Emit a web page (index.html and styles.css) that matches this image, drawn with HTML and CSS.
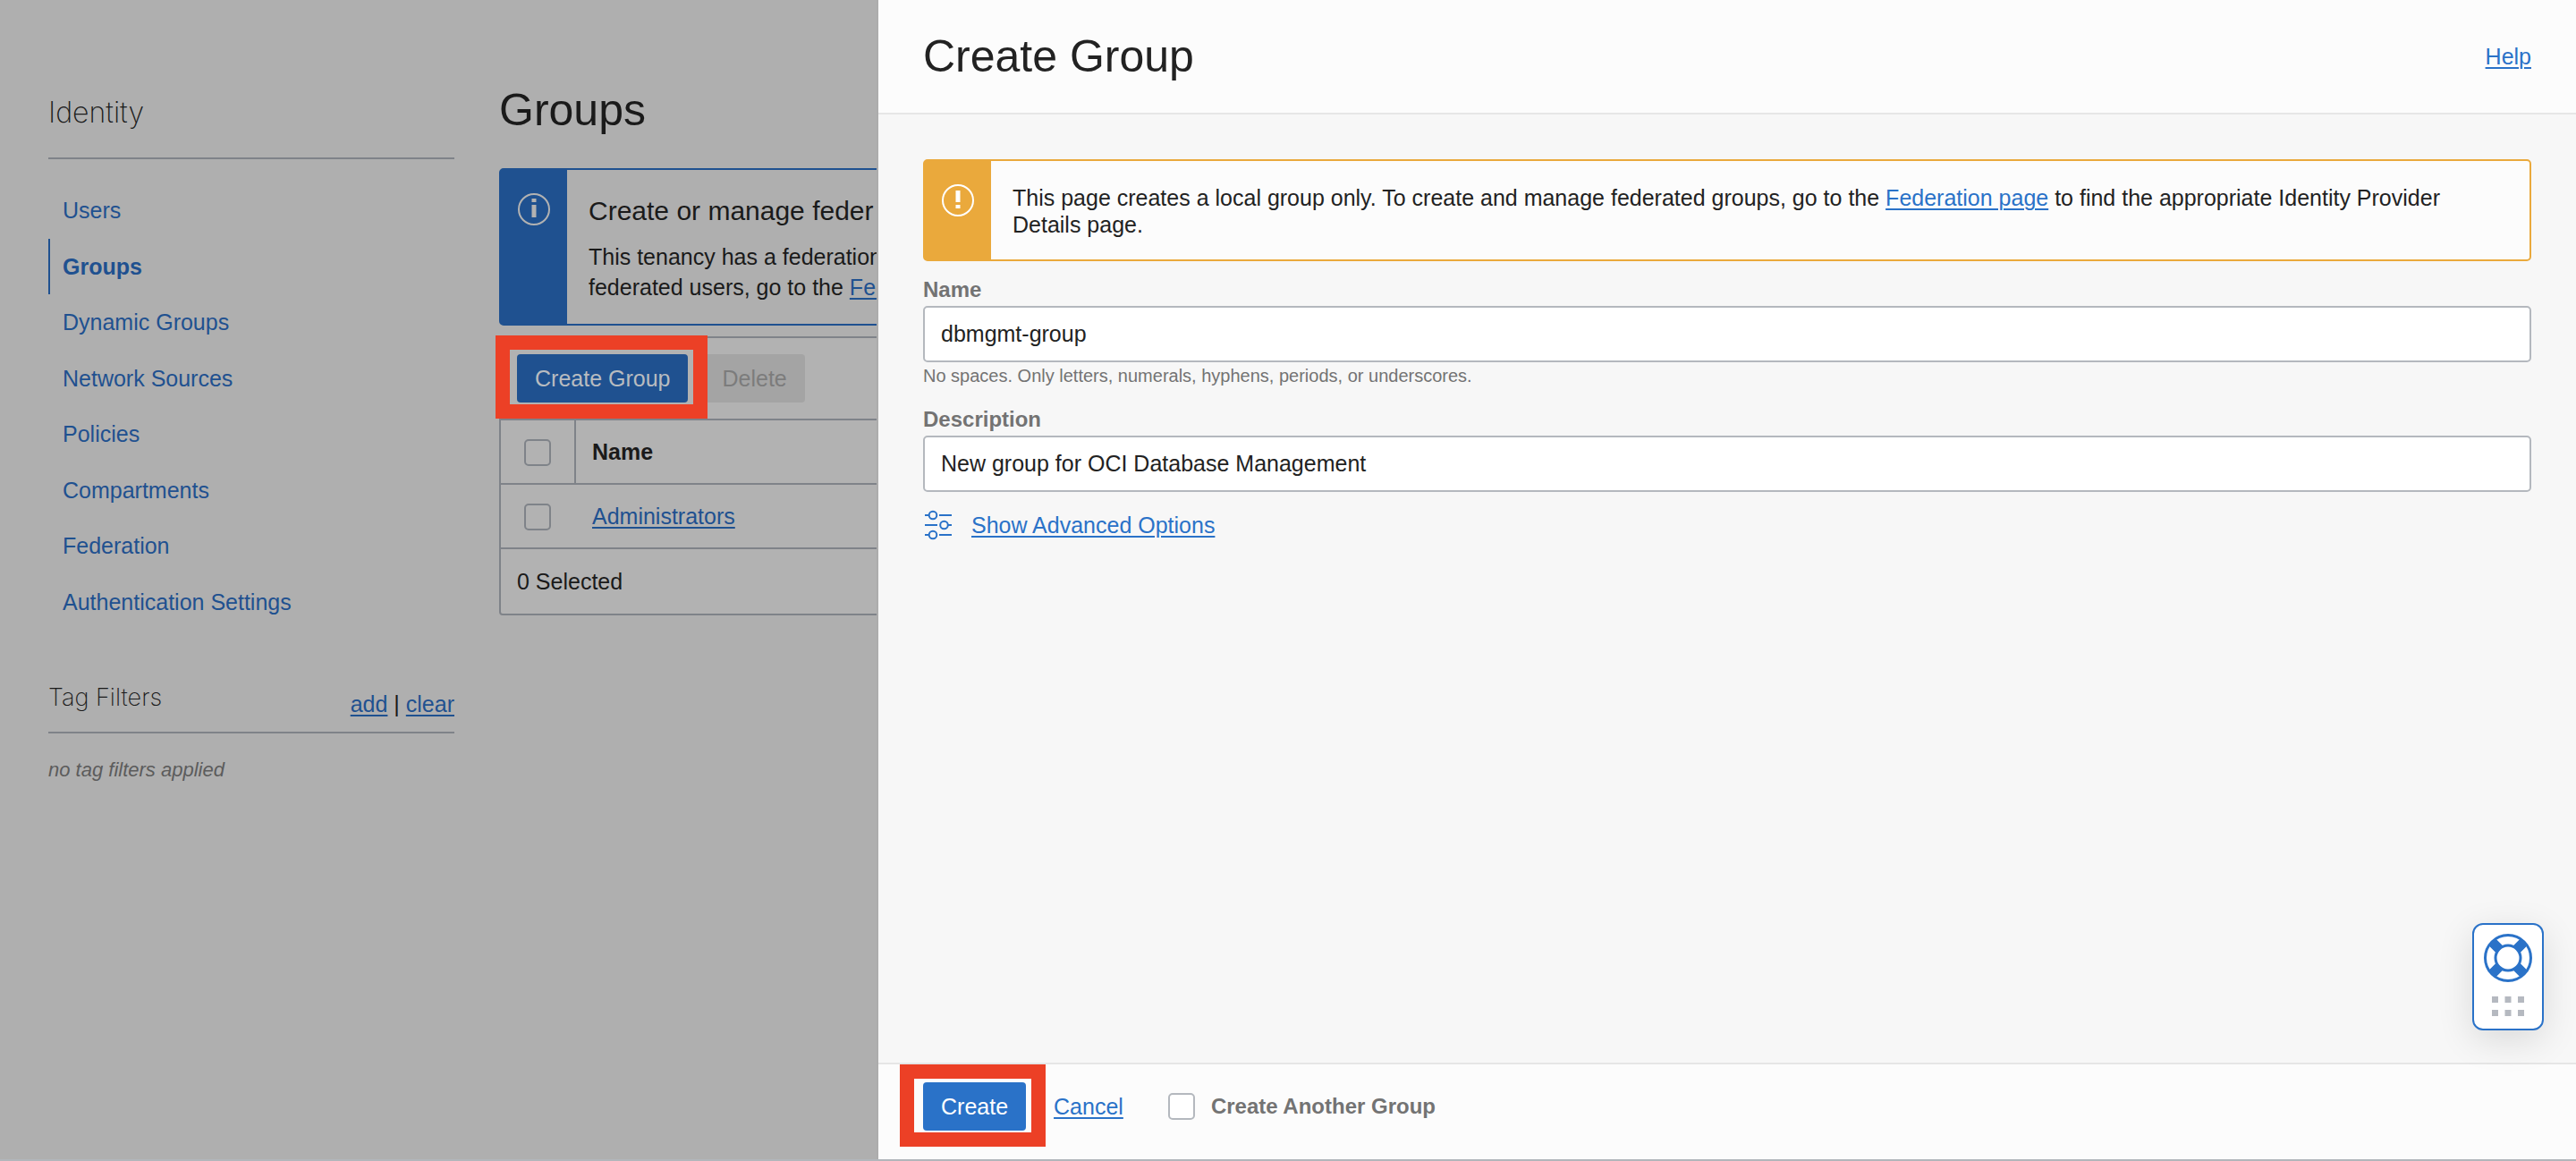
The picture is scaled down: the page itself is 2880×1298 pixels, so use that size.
FILE: index.html
```html
<!DOCTYPE html>
<html lang="en">
<head>
<meta charset="utf-8">
<title>Create Group</title>
<link rel="stylesheet" href="styles.css">
</head>
<body>
<div class="page">
  <aside class="sidebar">
    <h2 class="side-title">Identity</h2>
    <nav class="side-nav">
      <a href="#users">Users</a>
      <a href="#groups" class="active">Groups</a>
      <a href="#dynamic">Dynamic Groups</a>
      <a href="#network">Network Sources</a>
      <a href="#policies">Policies</a>
      <a href="#compartments">Compartments</a>
      <a href="#federation">Federation</a>
      <a href="#auth">Authentication Settings</a>
    </nav>
    <div class="tags-head">
      <h3 class="tags-title">Tag Filters</h3>
      <div class="tags-actions"><a href="#add">add</a> | <a href="#clear">clear</a></div>
    </div>
    <p class="tags-empty">no tag filters applied</p>
  </aside>
  <main class="main">
    <h1 class="title">Groups</h1>
    <section class="alert info">
      <div class="alert-icon">
        <svg width="36" height="36" viewBox="0 0 36 36" aria-hidden="true"><circle cx="18" cy="18" r="17" fill="none" stroke="currentColor" stroke-width="2"/><path d="M15.500 6h5v4h-5zM15.500 13h5v14h-5z" fill="currentColor"/></svg>
      </div>
      <div class="alert-body">
        <h2 class="alert-title">Create or manage feder</h2>
        <p>This tenancy has a federation</p>
        <p>federated users, go to the <a href="#fed">Fed</a></p>
      </div>
    </section>
    <section class="list">
      <div class="toolbar">
        <span class="mark"><button type="button" class="btn primary">Create Group</button></span>
        <button type="button" class="btn" disabled>Delete</button>
      </div>
      <table class="table">
        <thead><tr><th class="pick"><input type="checkbox" class="check" aria-label="Select all"></th><th>Name</th></tr></thead>
        <tbody><tr><td class="pick"><input type="checkbox" class="check" aria-label="Select Administrators"></td><td><a href="#administrators">Administrators</a></td></tr></tbody>
      </table>
      <div class="list-foot">0 Selected</div>
    </section>
  </main>
</div>
<form class="drawer">
  <header class="drawer-head">
    <h1 class="title">Create Group</h1>
    <a href="#help">Help</a>
  </header>
  <div class="drawer-body">
    <section class="alert warn">
      <div class="alert-icon">
        <svg width="36" height="36" viewBox="0 0 36 36" aria-hidden="true"><circle cx="18" cy="18" r="17" fill="none" stroke="currentColor" stroke-width="2"/><path d="M15.500 7h5v13h-5zM15.500 23h5v4h-5z" fill="currentColor"/></svg>
      </div>
      <p class="alert-body">This page creates a local group only. To create and manage federated groups, go to the <a href="#fed2">Federation page</a> to find the appropriate Identity Provider Details page.</p>
    </section>
    <label class="label" for="name">Name</label>
    <input class="field" id="name" type="text" value="dbmgmt-group">
    <p class="hint">No spaces. Only letters, numerals, hyphens, periods, or underscores.</p>
    <label class="label" for="desc">Description</label>
    <input class="field" id="desc" type="text" value="New group for OCI Database Management">
    <div class="advanced">
      <svg width="34" height="34" viewBox="0 0 34 34" fill="none" stroke="currentColor" stroke-width="2" aria-hidden="true"><path d="M2 6h5M18 6h14M2 17h14M27 17h5M2 28h5M18 28h14"/><circle cx="11" cy="6" r="4.300"/><circle cx="23.500" cy="17" r="4.300"/><circle cx="11" cy="28" r="4.300"/></svg>
      <a href="#advanced">Show Advanced Options</a>
    </div>
  </div>
  <footer class="drawer-foot">
    <span class="mark"><button type="button" class="btn primary">Create</button></span>
    <a href="#cancel">Cancel</a>
    <input type="checkbox" class="check" id="another">
    <label class="label" for="another">Create Another Group</label>
  </footer>
</form>
<button type="button" class="support" aria-label="Support">
  <svg width="54" height="54" viewBox="0 0 54 54" fill="none" stroke="#2a72c8" aria-hidden="true">
    <path d="M9.700 9.700l7.500 7.500M44.300 9.700l-7.500 7.500M9.700 44.300l7.500-7.500M44.300 44.300l-7.500-7.500" stroke-width="11"/>
    <circle cx="27" cy="27" r="25.500" stroke-width="3"/>
    <circle cx="27" cy="27" r="14" stroke-width="3"/>
  </svg>
  <svg width="36" height="22" viewBox="0 0 36 22" fill="#b5b9c0" aria-hidden="true"><path d="M0 0h7v7H0zM14.500 0h7v7h-7zM29 0h7v7h-7zM0 15h7v7H0zM14.500 15h7v7h-7zM29 15h7v7h-7z"/></svg>
</button>
</body>
</html>
```
FILE: styles.css
```css
* { box-sizing: border-box; }

body {
  display: grid;
  grid-template-columns: 980px 1fr;
  margin: 0;
  min-height: 100vh;
  border-bottom: 2px solid #b2b6bb;
  background: #afafaf;
  color: #1a1a1a;
  font: 25px/30px "Liberation Sans", Arial, sans-serif;
}

h1, h2, h3, p { margin: 0; font-weight: 400; }
a { color: #1f5190; text-decoration-thickness: 2px; text-underline-offset: 3px; }

.page {
  display: grid;
  grid-template-columns: 454px 1fr;
  gap: 46px;
  padding-left: 54px;
}

/* Sidebar */
.side-title {
  font: 200 32px/44px Inter, "Liberation Sans", sans-serif;
  padding: 104px 0 28px;
  border-bottom: 2px solid #7f8389;
}
.side-nav {
  display: flex;
  flex-direction: column;
  justify-content: space-between;
  height: 500px;
  margin-top: 26px;
}
.side-nav a {
  padding-left: 14px;
  border-left: 2px solid transparent;
  line-height: 62px;
  text-decoration: none;
}
.side-nav .active { border-color: #1f5190; font-weight: 700; }
.tags-head {
  display: flex;
  justify-content: space-between;
  align-items: flex-end;
  margin-top: 54px;
  padding-bottom: 16px;
  border-bottom: 2px solid #7f8389;
}
.tags-title { font: 200 27px/44px Inter, "Liberation Sans", sans-serif; }
.tags-empty { margin-top: 26px; color: #5c5c5c; font-size: 22px; font-style: italic; }

/* Groups list: the sheet runs on to the right, under the drawer's edge */
.main { overflow: hidden; padding-left: 4px; }
.main .alert, .list { margin-right: -20px; }
.title { font-size: 50px; line-height: 60px; }
.main .title { padding: 93px 0 35px; }

.alert {
  display: grid;
  grid-template-columns: 74px 1fr;
  border: 2px solid;
  border-radius: 5px;
}
.info { border-color: #1f5190; }
.info .alert-icon { background: #1f5190; color: #b2b2b2; }
.warn { border-color: #eaa93c; background: #fcfcfc; }
.warn .alert-icon { background: #eaa93c; color: #fff; }
.alert-icon { display: flex; justify-content: center; padding-top: 26px; }
.alert-body { padding: 26px 24px 24px; color: #222; }
.info .alert-body { line-height: 34px; padding: 28px 0 24px 24px; white-space: nowrap; color: #1a1a1a; }
.alert-title { font-size: 30px; line-height: 36px; padding-bottom: 16px; }

.list {
  margin-top: 12px;
  border: 2px solid #7f8389;
  border-radius: 4px;
  background: #b2b2b2;
}
.toolbar { display: flex; gap: 18px; padding: 18px; }
.btn {
  height: 54px;
  padding: 0 20px;
  border: 0;
  border-radius: 4px;
  background: #a4a4a4;
  color: #7c7c7c;
  font: inherit;
}
.primary { background: #1f5190; color: #b8bcc0; }
.mark { position: relative; display: flex; }
.mark::after {
  content: "";
  position: absolute;
  inset: -21px -22px -18px -24px;
  border: 16px solid #ec4026;
  pointer-events: none;
}
.main .mark { z-index: 1; }
.main { margin-left: -10px; padding-left: 14px; }
.table { width: 100%; border-spacing: 0; }
.table th, .table td {
  height: 72px;
  padding: 0 18px;
  border-top: 2px solid #7f8389;
  text-align: left;
}
.table .pick { width: 84px; padding: 2px 0 0 26px; }
.table th.pick { border-right: 2px solid #7f8389; }
.check {
  appearance: none;
  display: block;
  width: 30px;
  height: 30px;
  margin: 0;
  border: 2px solid #7f8389;
  border-radius: 5px;
}
.list-foot { padding: 21px 18px; border-top: 2px solid #7f8389; }

/* Create drawer */
.drawer {
  display: flex;
  flex-direction: column;
  border-left: 2px solid #acacac;
  background: #f7f7f7;
  color: #222;
}
.drawer a { color: #2a72c8; }
.drawer-head {
  display: flex;
  justify-content: space-between;
  align-items: center;
  padding: 33px 50px;
  border-bottom: 2px solid #e6e6e6;
  background: #fcfcfc;
}
.drawer-body { flex: 1; padding: 50px; }
.label { color: #737373; font-size: 24px; font-weight: 700; }
.drawer-body .label { display: block; margin: 17px 0 3px; }
.field {
  display: block;
  width: 100%;
  height: 63px;
  padding: 0 18px;
  border: 2px solid #b4b8be;
  border-radius: 5px;
  background: #fff;
  color: #222;
  font: inherit;
}
.hint { padding: 3px 0 5px; color: #737373; font-size: 20px; line-height: 24px; }
.advanced { display: flex; align-items: center; gap: 20px; margin-top: 20px; color: #2a72c8; }
.drawer-foot {
  display: flex;
  align-items: center;
  height: 108px;
  padding: 0 50px 12px;
  border-top: 2px solid #e6e6e6;
  background: #fcfcfc;
}
.drawer-foot .mark { margin-right: 31px; }
.drawer-foot .mark::after { inset: -20px -22px -18px -26px; }
.drawer-foot .primary { background: #2a72c8; color: #fff; }
.drawer-foot .check { margin: 0 18px 0 50px; border-color: #b4b8be; background: #fff; }

.support {
  position: fixed;
  right: 36px;
  bottom: 146px;
  display: flex;
  flex-direction: column;
  align-items: center;
  gap: 16px;
  width: 80px;
  height: 120px;
  padding: 10px 0 0;
  border: 2px solid #2a72c8;
  border-radius: 12px;
  background: #fff;
  box-shadow: 0 10px 40px rgba(0, 0, 0, .12);
}
```
